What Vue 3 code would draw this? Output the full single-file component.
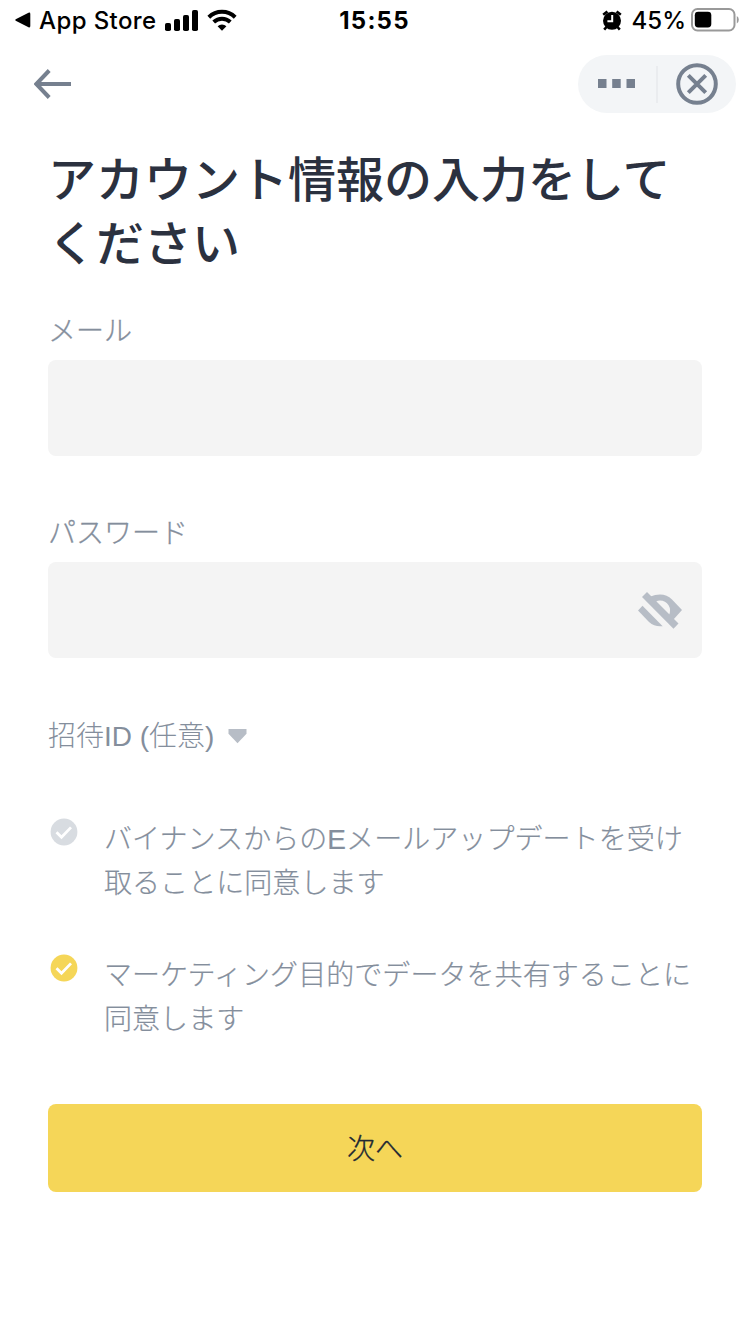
<template>
  <main class="screen">
    <div class="status">
      <div class="status__left">
        <svg class="status__back" width="16" height="16" viewBox="0 0 16 16">
          <path d="M1.2 6.9 13.5.8Q15.3 0 15.3 2v12q0 2-1.8 1.2L1.2 9Q-.8 8 1.2 6.9Z" />
        </svg>
        <span class="status__app">App Store</span>
        <svg class="status__signal" width="33" height="21" viewBox="0 0 33 21">
          <rect x="0" y="13" width="6" height="8" rx="1.8" />
          <rect x="9" y="9" width="6" height="12" rx="1.8" />
          <rect x="18" y="5" width="6" height="16" rx="1.8" />
          <rect x="27" y="0" width="6" height="21" rx="1.8" />
        </svg>
        <svg class="status__wifi" width="30" height="22" viewBox="0 0 30 22">
          <path d="M1.8 8.2a19 19 0 0 1 26.4 0M6.7 13a12.2 12.2 0 0 1 16.6 0" />
          <path class="status__wifi-dot" d="M10.6 17.3a6.4 6.4 0 0 1 8.8 0L15 21.7Z" />
        </svg>
      </div>
      <span class="status__time">15:55</span>
      <div class="status__right">
        <svg class="status__alarm" width="20" height="21" viewBox="0 0 20 21">
          <circle cx="10" cy="10.8" r="9" />
          <path class="status__alarm-line" d="M1.2 4.8 5.4 1.4M18.8 4.8 14.6 1.4M4.5 17 2.2 19.6M15.5 17l2.3 2.6" />
          <path class="status__alarm-hand" d="M10.2 5v6.2H5.4" />
        </svg>
        <span class="status__percent">45%</span>
        <svg class="status__battery" width="48" height="24" viewBox="0 0 48 24">
          <rect class="status__battery-case" x="1" y="1" width="42.5" height="21.5" rx="5.5" />
          <rect x="3.8" y="3.8" width="16.5" height="15.6" rx="3.4" />
          <path class="status__battery-tip" d="M45.8 8q2 1.2 2 3.8t-2 3.8Z" />
        </svg>
      </div>
    </div>

    <nav class="nav">
      <button type="button" class="nav__back" aria-label="戻る">
        <svg width="38" height="30" viewBox="0 0 38 30">
          <path d="M15.2 1.5 2.3 15l12.9 13.5M2.3 15H37" />
        </svg>
      </button>
      <div class="capsule">
        <button type="button" class="capsule__more" aria-label="メニュー">
          <svg width="37" height="9" viewBox="0 0 37 9">
            <path d="M0 0h8.5v9H0zM14.2 0h8.5v9h-8.5zM28.5 0H37v9h-8.5z" />
          </svg>
        </button>
        <span class="capsule__divider"></span>
        <button type="button" class="capsule__close" aria-label="閉じる">
          <svg width="42" height="42" viewBox="0 0 42 42">
            <circle cx="21" cy="21" r="18.8" />
            <path d="m12.3 12.3 17.4 17.4m0-17.4L12.3 29.7" />
          </svg>
        </button>
      </div>
    </nav>

    <form class="form" @submit.prevent>
      <h1 class="form__title">アカウント情報の入力をしてください</h1>

      <label class="field">
        <span class="field__label">メール</span>
        <span class="field__box">
          <input v-model="email" type="email" class="field__input" />
        </span>
      </label>

      <label class="field">
        <span class="field__label">パスワード</span>
        <span class="field__box">
          <input v-model="password" type="password" class="field__input" />
          <svg class="field__eye" width="44" height="37" viewBox="18 21.5 44 37">
            <path d="m27 21.5 31.5 31.5-5 5.2L22 26.5Z" />
            <path fill-rule="evenodd" d="M30.5 26Q35 24 40 24q7 0 12 5L62 39.5 53.5 49ZM35.8 31.3q2-1.3 4.200-1.300a10 10 0 0 1 9 14.500Z" />
            <path d="m22.5 35.3 20.200 20.500H40q-6 0-11-4.300L18 40Z" />
          </svg>
        </span>
      </label>

      <button type="button" class="form__invite">
        <span>招待ID (任意)</span>
        <svg width="19" height="15" viewBox="0 0 19 15">
          <path d="M.5 0h18v4.8l-9 9.5-9-9.5Z" />
        </svg>
      </button>

      <div
        v-for="item in agreements"
        :key="item.text"
        class="agree"
        @click="item.checked = !item.checked"
      >
        <svg
          class="agree__icon"
          :class="{ 'agree__icon--checked': item.checked }"
          width="28"
          height="28"
          viewBox="0 0 28 28"
        >
          <circle cx="14" cy="14" r="13.4" />
          <path d="m6.5 14.2 5 5 9.5-9.8" />
        </svg>
        <span class="agree__text">{{ item.text }}</span>
      </div>

      <button type="submit" class="form__submit">次へ</button>
    </form>
  </main>
</template>

<script setup>
 import { ref } from 'vue'

 const email = ref('')
 const password = ref('')

 const agreements = ref([
   {
     text: 'バイナンスからのEメールアップデートを受け取ることに同意します',
     checked: false
   },
   {
     text: 'マーケティング目的でデータを共有することに同意します',
     checked: true
   }
 ])
</script>

<style>
body {
  margin: 0;
  background: #fff;
}
</style>

<style scoped>
.screen {
  box-sizing: border-box;
  width: 750px;
  height: 1334px;
  overflow: hidden;
  background: #fff;
  color: #848e9c;
  font-family: 'Liberation Sans', 'Noto Sans CJK JP', sans-serif;
  font-size: 28px;
}

svg {
  display: block;
  flex: none;
}

button {
  padding: 0;
  border: none;
  background: none;
  color: inherit;
  font: inherit;
  cursor: pointer;
}

.status {
  display: grid;
  grid-template-columns: 1fr auto 1fr;
  align-items: center;
  height: 40px;
  padding: 0 11px 0 15px;
  color: #000;
  font-family: Inter, sans-serif;
  font-size: 24px;
  line-height: 38px;
}

.status__left,
.status__right {
  display: flex;
  align-items: center;
}

.status__right {
  justify-content: flex-end;
}

.status__app,
.status__time,
.status__percent {
  padding-top: 2px;
}

.status__app {
  width: 118px;
  margin-left: 8px;
  font-weight: 500;
  letter-spacing: 0.4px;
  white-space: nowrap;
}

.status__signal {
  margin-left: 8px;
}

.status__wifi {
  margin-left: 9px;
}

.status__wifi path {
  fill: none;
  stroke: #000;
  stroke-width: 4;
}

.status__wifi .status__wifi-dot {
  fill: #000;
  stroke: none;
}

.status__time {
  margin-right: 5px;
  font-weight: 700;
  letter-spacing: 1.2px;
}

.status__alarm-line {
  stroke: #000;
  stroke-width: 2.6;
}

.status__alarm-hand {
  fill: none;
  stroke: #fff;
  stroke-width: 2;
}

.status__percent {
  margin: 0 5px 0 10px;
  font-weight: 500;
}

.status__battery-case {
  fill: none;
  stroke: #999;
  stroke-width: 2;
}

.status__battery-tip {
  fill: #999;
}

.nav {
  display: flex;
  align-items: center;
  justify-content: space-between;
  height: 88px;
  padding: 0 14px 0 34px;
}

.nav svg {
  margin-bottom: 1px;
}

.nav__back path {
  fill: none;
  stroke: #76808f;
  stroke-width: 4;
}

.capsule {
  display: flex;
  align-items: center;
  width: 158px;
  height: 58px;
  border-radius: 29px;
  background: #f3f5f7;
}

.capsule__more,
.capsule__close {
  display: flex;
  align-items: center;
  justify-content: center;
  box-sizing: border-box;
  width: 78px;
}

.capsule__more {
  padding-right: 2px;
}

.capsule__more path {
  fill: #76808f;
}

.capsule__divider {
  width: 2px;
  height: 37px;
  background: #eaecef;
}

.capsule__close circle,
.capsule__close path {
  fill: none;
  stroke: #76808f;
  stroke-width: 4;
}

.form {
  padding: 21px 48px 0;
}

.form__title {
  margin: 0 0 35px;
  color: #2b313f;
  font-size: 48px;
  font-weight: 500;
  line-height: 64px;
}

.field {
  display: block;
  margin-bottom: 56px;
}

.field + .field {
  margin-top: 58px;
}

.field__label {
  display: block;
  height: 48px;
  font-weight: 300;
  line-height: 40px;
  -webkit-text-stroke: 0.3px currentColor;
}

.field__box {
  display: flex;
  align-items: center;
  height: 96px;
  padding: 0 20px;
  box-sizing: border-box;
  border-radius: 8px;
  background: #f4f4f4;
}

.field__input {
  flex: 1;
  min-width: 0;
  border: none;
  outline: none;
  background: transparent;
  color: #2b313f;
  font: inherit;
}

.field__eye {
  fill: #b7bdc6;
}

.form__invite {
  display: flex;
  align-items: center;
  gap: 14px;
  height: 44px;
  margin-bottom: 58px;
  font-weight: 300;
  line-height: 44px;
}

.form__invite span {
  padding-top: 2px;
}

.form__invite path {
  fill: #b7bdc6;
}

.agree {
  display: flex;
  align-items: flex-start;
  gap: 26px;
  margin: 0 -10px 46px 2px;
}

.agree__icon {
  margin-top: 2px;
  fill: #d8dce1;
}

.agree__icon--checked {
  fill: #f5d658;
}

.agree__icon path {
  fill: none;
  stroke: #fff;
  stroke-width: 2.8;
}

.agree__text {
  width: 600px;
  padding-top: 2px;
  font-weight: 300;
  line-height: 44px;
  letter-spacing: 0.06px;
  -webkit-text-stroke: 0.2px currentColor;
}

.form__submit {
  display: block;
  width: 100%;
  height: 88px;
  margin-top: 62px;
  padding-bottom: 2px;
  border-radius: 8px;
  background: #f5d658;
  color: #212833;
  font-weight: 300;
  -webkit-text-stroke: 0.3px currentColor;
}
</style>
